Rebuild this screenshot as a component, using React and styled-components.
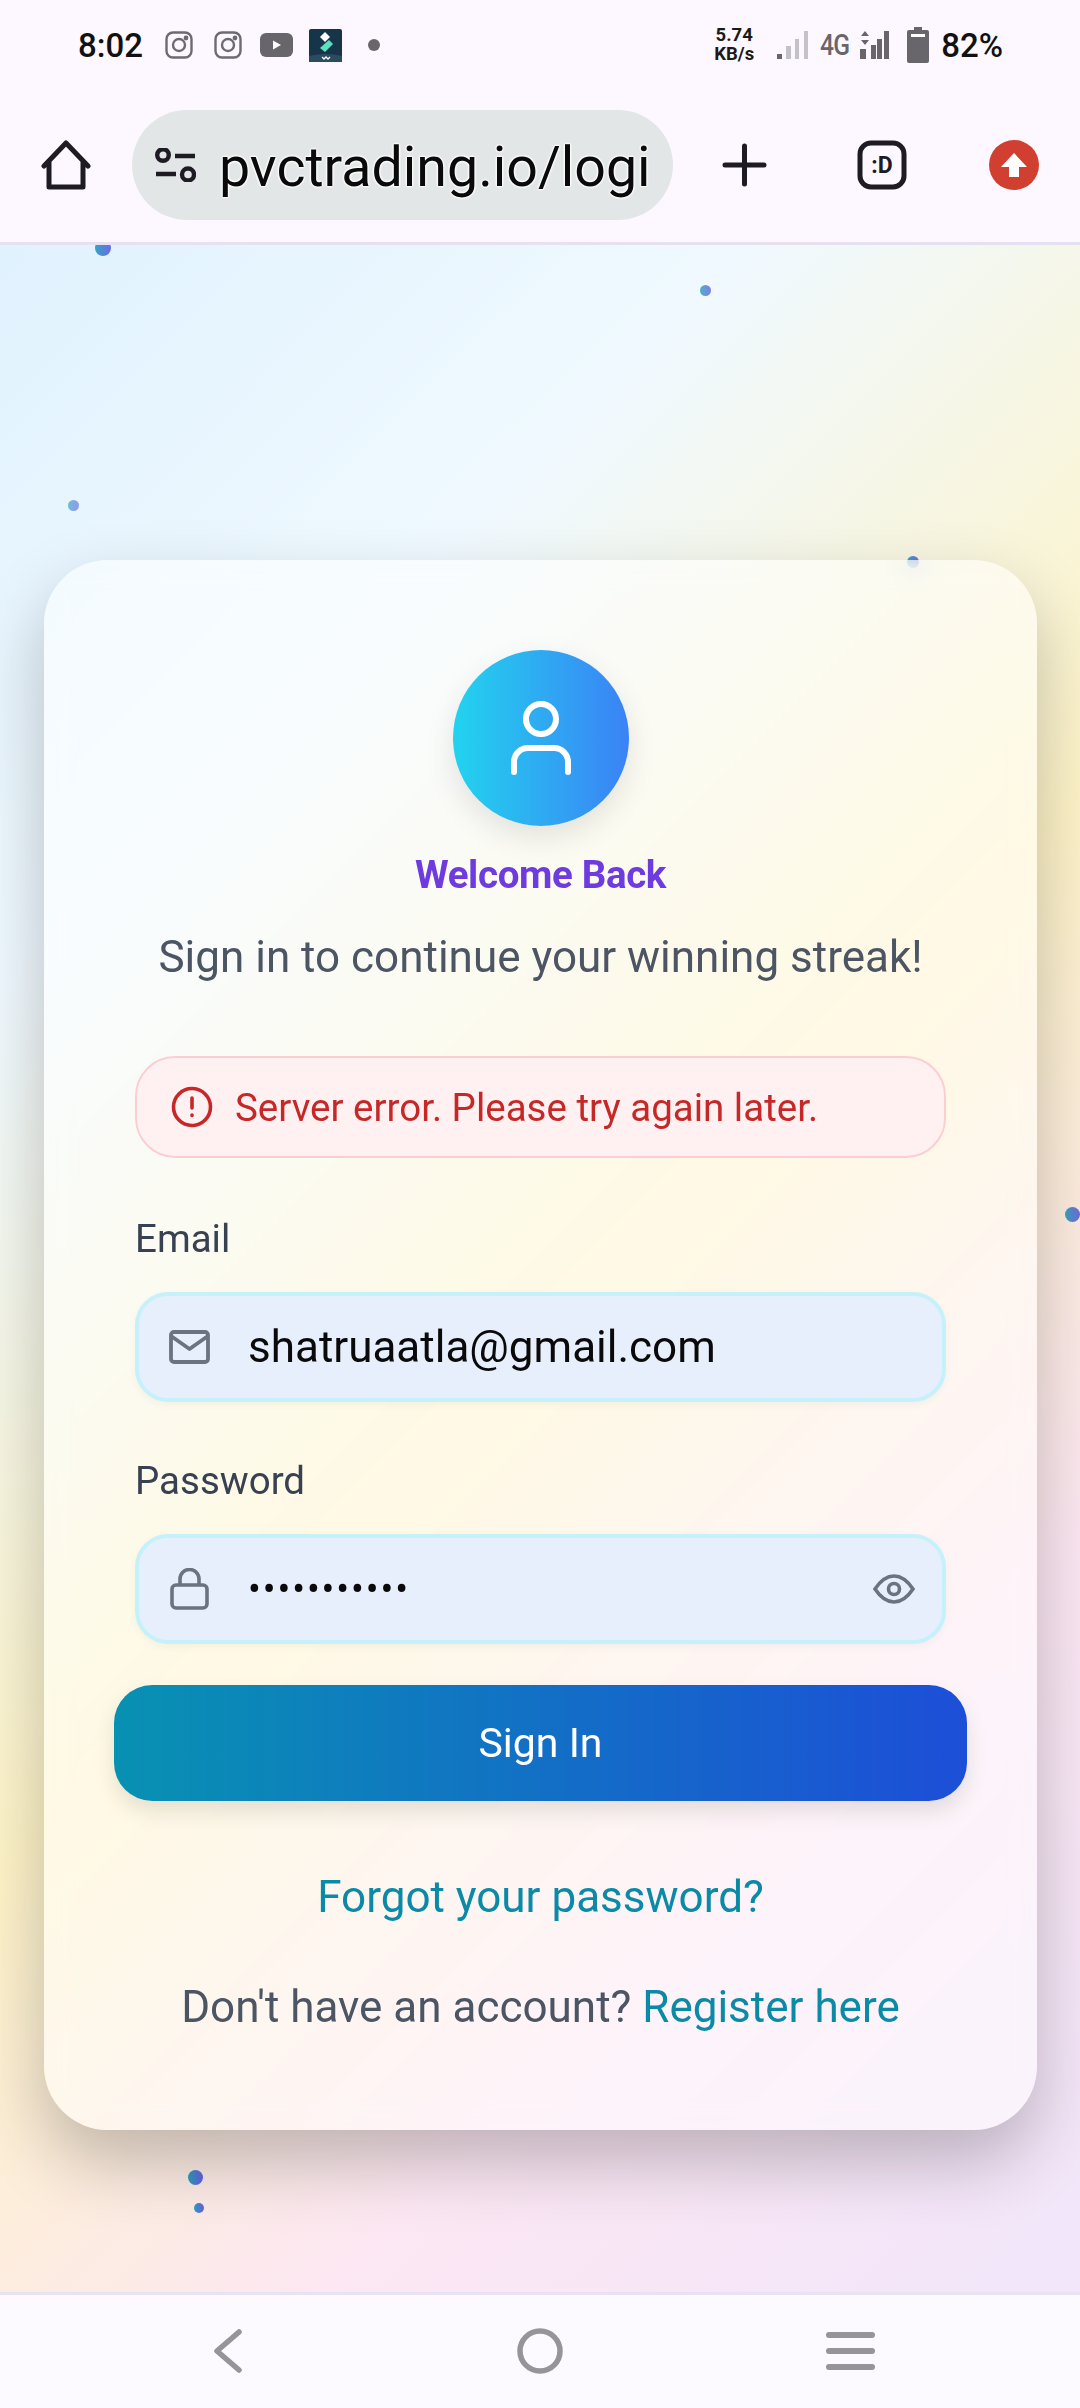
import React from "react";
import styled, { createGlobalStyle } from "styled-components";

const Global = createGlobalStyle`
  html, body { margin: 0; padding: 0; background: #fdf8ff; }
  * { box-sizing: border-box; }
  body { font-family: Roboto, "Liberation Sans", sans-serif; }
`;

const Screen = styled.div`
  width: 1080px; height: 2408px; display: flex; flex-direction: column; overflow: hidden; position: relative;
`;
const Chrome = styled.header`
  height: 245px; flex: none; background: #fdf8ff; border-bottom: 3px solid #e5e1f1; position: relative; z-index: 2;
`;
const StatusBar = styled.div`
  height: 90px; padding: 0 77px 0 78px; display: flex; align-items: center; justify-content: space-between;
`;
const StatusGroup = styled.div`display: flex; align-items: center;`;
const Time = styled.span`font-size: 33px; font-weight: 500; color: #111; width: 64px;`;
const Speed = styled.span`
  font-size: 18.5px; line-height: 19px; font-weight: 700; color: #1a1a1a; text-align: center; margin-top: -1px; width: 42px;
`;
const NetLabel = styled.span`
  font-size: 30px; font-weight: 500; color: #69666b; margin-left: 12px; width: 29px; white-space: nowrap; letter-spacing: -1px;
  transform: scaleX(.82); transform-origin: left center; margin-top: -2px;
`;
const Percent = styled.span`font-size: 33px; font-weight: 500; color: #111; margin-left: 12px;`;
const StatusIcon = styled.svg`flex: none; display: block; margin-left: ${p => p.$left}px;`;
const Toolbar = styled.div`
  height: 150px; padding: 20px 0 0 41px; display: flex; align-items: flex-start;
`;
const ToolIcon = styled.svg`flex: none; display: block; margin-top: ${p => p.$top}px; margin-left: ${p => p.$left}px;`;
const UrlPill = styled.div`
  width: 541px; height: 110px; margin-left: 41px; border-radius: 55px; background: #e2e6e6; display: flex; align-items: center;
  padding-left: 23px; flex: none;
`;
const SiteIcon = styled.svg`flex: none; display: block;`;
const UrlText = styled.span`
  display: block; padding: 6px 0 0 3px;
  font-size: 55.5px; line-height: 64px; color: #0a0a0a; margin-left: 20px; white-space: nowrap;
  text-shadow: 0 0 2px #fff, 0 0 2px #fff, 0 0 3px #fff, 0 0 3px #fff, 0 0 3px #fff;
`;
const Page = styled.main`
  flex: 1; position: relative; padding: 315px 43px 0 44px; overflow: hidden;
  background: linear-gradient(135deg, #e0f2fe 0%, #f0f9ff 24%, #fef3c7 52%, #fce7f3 76%, #f1e6fb 100%);
`;
const Dot = styled.span`
  position: absolute; border-radius: 50%; background: linear-gradient(90deg, #0891b2, #4f46e5);
  width: ${p => p.$s}px; height: ${p => p.$s}px; left: ${p => p.$x}px; top: ${p => p.$y}px; opacity: ${p => p.$o || .7};
`;
const Card = styled.section`
  position: relative; height: 1570px; border-radius: 64px; padding: 90px 70px 0;
  background: rgba(255,255,255,.52);
  backdrop-filter: blur(12px);
  box-shadow: 0 32px 70px rgba(0,0,0,.24);
  display: flex; flex-direction: column; align-items: stretch;
`;
const Avatar = styled.div`
  width: 176px; height: 176px; border-radius: 50%; align-self: center; display: flex; align-items: center; justify-content: center;
  background: linear-gradient(90deg, #22d3ee, #3b82f6); box-shadow: 0 11px 30px rgba(0,0,0,.1);
`;
const Title = styled.h1`
  margin: 26px 0 0; text-align: center; font-size: 38.5px; line-height: 46px; font-weight: 700; color: #6d3bdf; letter-spacing: -.35px;
`;
const Subtitle = styled.p`
  margin: 33px 0 0; text-align: center; font-size: 44px; line-height: 52px; color: #4b5563;
`;
const Field = styled.div`margin: 0 21px;`;
const ErrorBox = styled(Field)`
  margin-top: 73px; height: 102px; border-radius: 40px; background: #fff1f2; border: 2px solid #fbcfd2;
  display: flex; align-items: center; padding-left: 34px; gap: 22px; color: #c62828; font-size: 38.5px;
`;
const Label = styled.div`
  margin: ${p => p.$top}px 21px 0; font-size: 38.5px; line-height: 46px; color: #374151;
`;
const InputBox = styled(Field)`
  margin-top: 30px; height: 110px; border-radius: 33px; background: #e8effc; border: 4.5px solid #c5f1fb;
  display: flex; align-items: center; padding-left: 30px; padding-right: 27px;
  box-shadow: 0 3px 8px rgba(0,0,0,.04);
`;
const InputValue = styled.span`
  flex: 1; margin-left: 38px; font-size: ${p => p.$size || 44}px; color: #0a0a0a; white-space: nowrap;
  letter-spacing: ${p => p.$ls || 0}px;
`;
const SignIn = styled.button`
  margin-top: 41px; height: 116px; border: 0; border-radius: 38px; color: #fff; font: 400 41px Roboto, sans-serif;
  background: linear-gradient(90deg, #0891b2, #1d4ed8); box-shadow: 0 11px 22px rgba(0,0,0,.1);
`;
const Forgot = styled.a`
  margin-top: 70px; text-align: center; font-size: 44px; line-height: 52px; color: #0b8aa8;
`;
const Register = styled.p`
  margin: 58px 0 0; text-align: center; font-size: 44px; line-height: 52px; color: #4b5563;
`;
const RegisterLink = styled.a`color: #0b8aa8;`;
const NavBar = styled.nav`
  height: 116px; flex: none; background: #fcf9ff; border-top: 3px solid #e8e3f2; position: relative; z-index: 2;
  display: grid; grid-template-columns: 213px 304px 309px 49px; grid-template-rows: 46px; padding-top: 33px; align-items: center;
`;
const Blank = styled.span``;
const NavIcon = styled.svg`display: block;`;

const Insta = ({ left }) => (
  <StatusIcon $left={left} width="28" height="28" viewBox="0 0 28 28" fill="none" stroke="#6d6b70" strokeWidth="2.4">
    <rect x="1.5" y="1.5" width="25" height="25" rx="6.5" /><circle cx="14" cy="14" r="6" /><circle cx="21" cy="7" r="1.2" fill="#6d6b70" />
  </StatusIcon>
);

export default function App() {
  return (
    <Screen>
      <Global />
      <Chrome>
        <StatusBar>
          <StatusGroup>
            <Time>8:02</Time>
            <Insta left={23} />
            <Insta left={21} />
            <StatusIcon $left={18} width="33" height="24" viewBox="0 0 33 24">
              <rect width="33" height="24" rx="6" fill="#69666b" /><path d="M13 7.5v9l8-4.5z" fill="#fff" />
            </StatusIcon>
            <StatusIcon $left={16} width="33" height="33" viewBox="0 0 33 33">
              <rect width="33" height="33" rx="2" fill="#173549" />
              <path d="M16 3l5 5-5 5-5-5z" fill="#fff" /><path d="M20 11l4 4-8 8-5-4z" fill="#5ce0c0" />
              <path d="M0 27q16.5-4 33 0v6H0z" fill="#2b4b60" /><path d="M13 28l2 2 2-2 2 2 2-2" stroke="#fff" strokeWidth="1.3" fill="none" />
            </StatusIcon>
            <StatusIcon $left={26} width="12" height="12" viewBox="0 0 12 12"><circle cx="6" cy="6" r="6" fill="#69666b" /></StatusIcon>
          </StatusGroup>
          <StatusGroup>
            <Speed>5.74<br />KB/s</Speed>
            <StatusIcon $left={22} width="31" height="28" viewBox="0 0 31 28">
              <rect y="23" width="5" height="5" fill="#69666b" /><rect x="9" y="15" width="5" height="13" fill="#c4c1c7" /><rect x="18" y="8" width="4" height="20" fill="#c4c1c7" /><rect x="27" width="4" height="28" fill="#c4c1c7" />
            </StatusIcon>
            <NetLabel>4G</NetLabel>
            <StatusIcon $left={9} width="32" height="28" viewBox="0 0 32 28">
              <path d="M3 5l4-5 4 5zM3 9h8l-4 5z" fill="#69666b" /><rect x="2" y="18" width="6" height="10" fill="#69666b" /><rect x="13" y="14" width="5" height="14" fill="#69666b" /><rect x="26" width="5" height="28" fill="#69666b" /><rect x="19" y="8" width="5" height="20" fill="#69666b" />
            </StatusIcon>
            <StatusIcon $left={17} width="22" height="36" viewBox="0 0 22 36">
              <path d="M7 0h8v3h5a2 2 0 012 2v29a2 2 0 01-2 2H2a2 2 0 01-2-2V5a2 2 0 012-2h5z" fill="#69666b" /><rect x="4" y="7" width="14" height="3" fill="#fff" />
            </StatusIcon>
            <Percent>82%</Percent>
          </StatusGroup>
        </StatusBar>
        <Toolbar>
          <ToolIcon $top={30} $left={0} width="50" height="50" viewBox="0 0 50 50" fill="none" stroke="#1f1b24" strokeWidth="5" strokeLinejoin="round" strokeLinecap="round">
            <path d="M3 26L25 3l22 23M8 22v25h34V22" />
          </ToolIcon>
          <UrlPill>
            <SiteIcon width="41" height="34" viewBox="0 0 41 34" fill="none" stroke="#1f1b24" strokeWidth="4.4">
              <circle cx="8" cy="7" r="5.8" /><path d="M20 8h20M1 26h20" /><circle cx="33" cy="26.5" r="6" />
            </SiteIcon>
            <UrlText>pvctrading.io/logi</UrlText>
          </UrlPill>
          <ToolIcon $top={33} $left={49} width="45" height="44" viewBox="0 0 45 44" fill="none" stroke="#1f1b24" strokeWidth="5" strokeLinecap="round">
            <path d="M22.5 3v38M3 22h39" />
          </ToolIcon>
          <ToolIcon $top={30} $left={90} width="50" height="50" viewBox="0 0 50 50">
            <rect x="3" y="3" width="44" height="44" rx="11" fill="none" stroke="#1f1b24" strokeWidth="5" />
            <text x="25" y="33" textAnchor="middle" fontFamily="Roboto, sans-serif" fontWeight="700" fontSize="23" fill="#1f1b24">:D</text>
          </ToolIcon>
          <ToolIcon $top={30} $left={82} width="50" height="50" viewBox="0 0 50 50">
            <circle cx="25" cy="25" r="25" fill="#d13f31" /><path d="M25 13L12 27h8v10h10V27h8z" fill="#fff" />
          </ToolIcon>
        </Toolbar>
      </Chrome>
      <Page>
        <Dot $s={16} $x={95} $y={-5} $o={.8} />
        <Dot $s={11} $x={700} $y={40} />
        <Dot $s={11} $x={68} $y={255} $o={.55} />
        <Dot $s={12} $x={907} $y={311} $o={.8} />
        <Dot $s={15} $x={1065} $y={962} $o={.8} />
        <Dot $s={15} $x={188} $y={1925} $o={.85} />
        <Dot $s={10} $x={194} $y={1958} $o={.85} />
        <Card>
          <Avatar>
            <svg width="60" height="74" viewBox="0 0 60 74" fill="none" stroke="#fff" strokeWidth="6" strokeLinecap="round">
              <circle cx="30" cy="18" r="15" /><path d="M3 71V61a14 14 0 0114-14h26a14 14 0 0114 14v10" />
            </svg>
          </Avatar>
          <Title>Welcome Back</Title>
          <Subtitle>Sign in to continue your winning streak!</Subtitle>
          <ErrorBox>
            <svg width="42" height="42" viewBox="0 0 42 42" fill="none" stroke="#c62828" strokeWidth="3.6" strokeLinecap="round">
              <circle cx="21" cy="21" r="18.5" /><path d="M21 12v10M21 29v.5" />
            </svg>
            <span>Server error. Please try again later.</span>
          </ErrorBox>
          <Label $top={58}>Email</Label>
          <InputBox>
            <svg width="41" height="34" viewBox="0 0 41 34" fill="none" stroke="#6b7280" strokeWidth="3.8" strokeLinejoin="round">
              <rect x="2" y="2" width="37" height="30" rx="3" /><path d="M2 6l18.5 13L39 6" />
            </svg>
            <InputValue>shatruaatla@gmail.com</InputValue>
          </InputBox>
          <Label $top={56}>Password</Label>
          <InputBox>
            <svg width="41" height="42" viewBox="0 0 41 42" fill="none" stroke="#6b7280" strokeWidth="3.6" strokeLinejoin="round">
              <rect x="3" y="17" width="35" height="23" rx="4" /><path d="M11 17v-6a9.5 9.5 0 0119 0v6" />
            </svg>
            <InputValue $size={38} $ls={1.9}>•••••••••••</InputValue>
            <svg width="42" height="30" viewBox="0 0 42 30" fill="none" stroke="#6b7280" strokeWidth="3.6">
              <path d="M2 15C8 6 14 2 21 2s13 4 19 13c-6 9-12 13-19 13S8 24 2 15z" /><circle cx="21" cy="15" r="5.5" />
            </svg>
          </InputBox>
          <SignIn>Sign In</SignIn>
          <Forgot>Forgot your password?</Forgot>
          <Register>Don't have an account? <RegisterLink>Register here</RegisterLink></Register>
        </Card>
      </Page>
      <NavBar>
        <Blank />
        <NavIcon width="30" height="44" viewBox="0 0 30 44" fill="none" stroke="#969498" strokeWidth="5.5" strokeLinecap="round" strokeLinejoin="round">
          <path d="M26 3L4 22l22 19" />
        </NavIcon>
        <NavIcon width="46" height="46" viewBox="0 0 46 46" fill="none" stroke="#969498" strokeWidth="5.5"><circle cx="23" cy="23" r="20" /></NavIcon>
        <NavIcon width="49" height="38" viewBox="0 0 49 38" fill="#969498">
          <rect width="49" height="6" rx="3" /><rect y="16" width="49" height="6" rx="3" /><rect y="32" width="49" height="6" rx="3" />
        </NavIcon>
      </NavBar>
    </Screen>
  );
}
